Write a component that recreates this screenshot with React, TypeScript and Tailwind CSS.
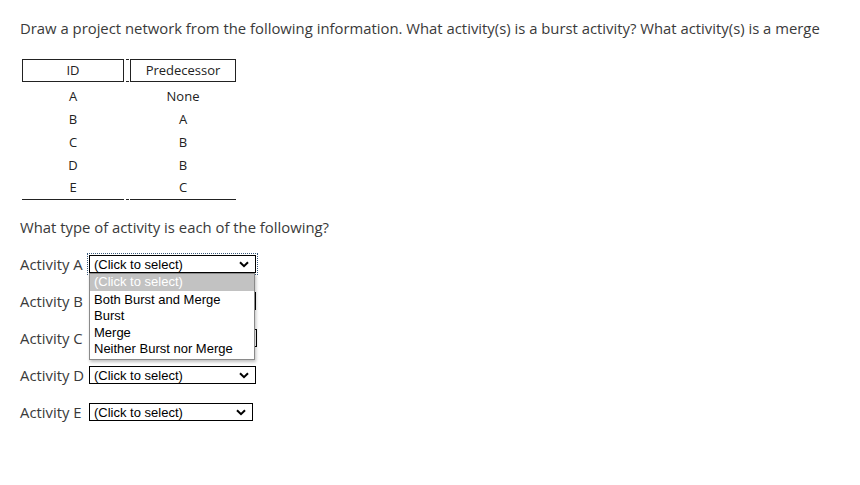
import React from 'react'

const rows = [
    { id: 'A', pred: 'None' },
    { id: 'B', pred: 'A' },
    { id: 'C', pred: 'B' },
    { id: 'D', pred: 'B' },
    { id: 'E', pred: 'C' },
]

const options = ['(Click to select)', 'Both Burst and Merge', 'Burst', 'Merge', 'Neither Burst nor Merge']

const Chevron = () => (
    <svg width="10" height="7" viewBox="0 0 10 7" className="shrink-0">
        <path d="M1 1.2 L5 5.2 L9 1.2" fill="none" stroke="#000" strokeWidth="2" />
    </svg>
)

const FakeSelect = ({ width, open }: { width: string; open?: boolean }) => (
    <div className="relative">
        <div className={`${width} h-[18px] border border-black bg-white flex items-center justify-between pl-[4px] pr-[6px] ${open ? 'outline-1 outline-dotted outline-[#3b5b7d] outline-offset-1' : ''}`}>
            <span className="text-[13px] leading-none text-black font-['Liberation_Sans',Arial,sans-serif]">(Click to select)</span>
            <Chevron />
        </div>
        {open && (
            <div className="absolute left-0 top-[18px] w-[166px] z-10 bg-white border border-[#8a8a8a] shadow-[1px_2px_3px_rgba(0,0,0,0.25)] font-['Liberation_Sans',Arial,sans-serif] text-[13px] pb-[1px]">
                {options.map((o, i) => (
                    <div
                        key={o}
                        className={`h-[16.6px] leading-[16.6px] pl-[4px] ${i === 0 ? 'bg-[#c2c2c2] text-white mb-[1px]' : 'text-black'}`}
                    >
                        {o}
                    </div>
                ))}
            </div>
        )}
    </div>
)

export default function App() {
    const labels = ['A', 'B', 'C', 'D', 'E']
    return (
        <div className="w-[860px] h-[485px] bg-white pl-[20px] pt-[18px] text-[#3a3a3a] font-['Open_Sans','Lato',sans-serif]">
            <p className="text-[14.85px] leading-[20px] whitespace-nowrap">
                Draw a project network from the following information. What activity(s) is a burst activity? What activity(s) is a merge
            </p>

            {/* table (picture in the original) */}
            <div className="mt-[21px] ml-[2px] w-[214px] text-[13px] text-[#222] font-['Open_Sans','Noto_Sans',sans-serif]">
                <div className="flex h-[23px]">
                    <div className="w-[102px] border border-[#222] flex items-center justify-center leading-none">ID</div>
                    <div className="w-[6px] flex flex-col justify-between items-center">
                        <div className="w-[3px] h-px bg-[#222]" />
                        <div className="w-[3px] h-px bg-[#222]" />
                    </div>
                    <div className="w-[106px] border border-[#222] flex items-center justify-center leading-none">Predecessor</div>
                </div>
                {rows.map((r, i) => (
                    <div key={r.id} className={`flex ${i === 0 ? 'mt-[3px]' : ''} h-[23px]`}>
                        <div className={`w-[102px] flex items-center justify-center ${i === rows.length - 1 ? 'border-b border-[#222]' : ''}`}>{r.id}</div>
                        <div className="w-[6px] flex flex-col justify-end items-center">
                            {i === rows.length - 1 && <div className="w-[3px] h-px bg-[#222]" />}
                        </div>
                        <div className={`w-[106px] flex items-center justify-center ${i === rows.length - 1 ? 'border-b border-[#222]' : ''}`}>{r.pred}</div>
                    </div>
                ))}
            </div>

            <p className="mt-[17px] text-[14.85px] leading-[20px]">What type of activity is each of the following?</p>

            <div className="mt-[18px] flex flex-col gap-[19px]">
                {labels.map((l, i) => (
                    <div key={l} className="flex items-center h-[18px]">
                        <span className="text-[14.85px] leading-none w-[69px] whitespace-nowrap">Activity {l}</span>
                        <FakeSelect width={i === 4 ? 'w-[164px]' : i === 2 ? 'w-[168px]' : 'w-[167px]'} open={i === 0} />
                    </div>
                ))}
            </div>
        </div>
    )
}
